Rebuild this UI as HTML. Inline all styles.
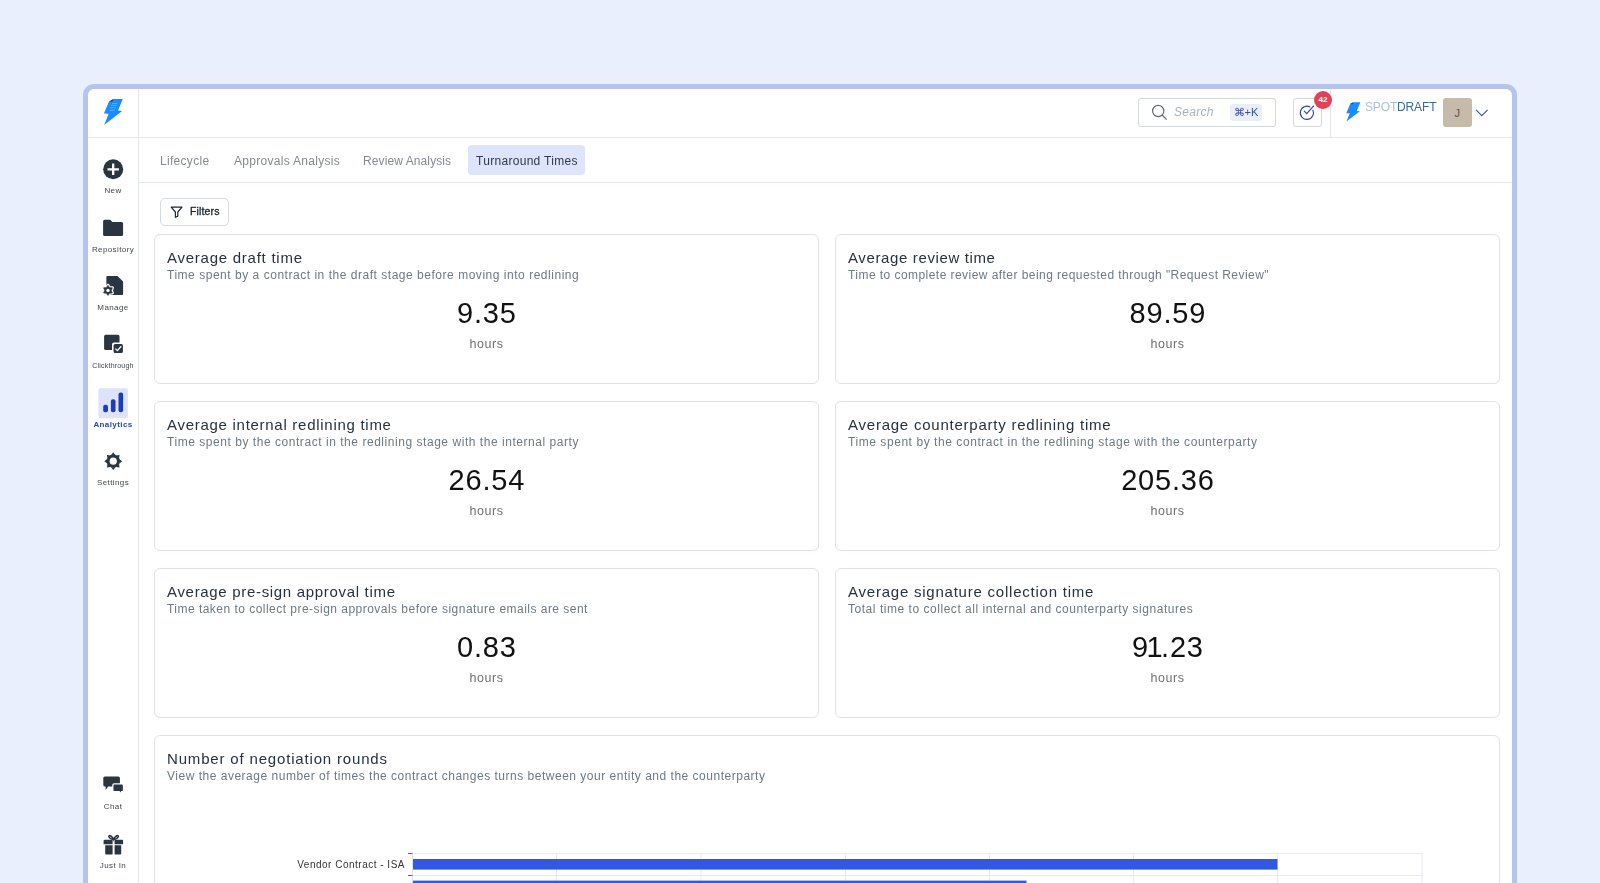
<!DOCTYPE html>
<html><head><meta charset="utf-8">
<style>
*{box-sizing:border-box;margin:0;padding:0}
html,body{width:1600px;height:883px;overflow:hidden;background:#e9effc;font-family:"Liberation Sans",sans-serif}
#frame{position:absolute;left:83px;top:84px;width:1434px;height:900px;border:5px solid #b5c3ef;border-radius:11px;background:#fff}
.vline{position:absolute;background:#e3e6ea;width:1px}
.hline{position:absolute;background:#e3e6ea;height:1px}
.lbl{position:absolute;left:88px;width:50px;text-align:center;font-size:8px;line-height:10px;color:#40464e;white-space:nowrap;letter-spacing:0.4px}
.tab{position:absolute;top:145.5px;height:30px;line-height:30px;font-size:12px;color:#848a92;white-space:nowrap;letter-spacing:0.3px}
.card{position:absolute;border:1.5px solid #dfe2e6;border-radius:6px;background:#fff}
.ttl{position:absolute;font-size:15px;line-height:18px;color:#27323e;white-space:nowrap}
.sub{position:absolute;font-size:12px;line-height:14px;color:#6d7986;white-space:nowrap}
.num{position:absolute;font-size:29px;line-height:32px;color:#111;text-align:center;white-space:nowrap}
.unit{position:absolute;font-size:12.5px;line-height:14px;color:#707070;text-align:center;white-space:nowrap;letter-spacing:0.5px}
.t{position:absolute;white-space:nowrap}
svg{position:absolute;left:0;top:0}
.tx,.ttl,.sub,.num,.unit,.lbl,.tab{will-change:transform}

</style></head><body>
<div id="frame"></div>
<div class="vline" style="left:138px;top:89px;height:800px"></div>
<div class="hline" style="left:88px;top:137px;width:1424px"></div>
<div class="hline" style="left:139px;top:182px;width:1373px"></div>
<div class="vline" style="left:1330px;top:89px;height:48px"></div>

<div class="lbl" style="top:186px">New</div>
<div class="lbl" style="top:245px">Repository</div>
<div class="lbl" style="top:303px">Manage</div>
<div class="lbl" style="top:361px;font-size:7px;letter-spacing:0.2px">Clickthrough</div>
<div class="lbl" style="top:420px;color:#2744bd;font-weight:bold">Analytics</div>
<div class="lbl" style="top:478px">Settings</div>
<div class="lbl" style="top:802px">Chat</div>
<div class="lbl" style="top:861px">Just In</div>

<div class="t" style="left:1138px;top:98px;width:138px;height:29px;border:1px solid #d3d8dc;border-radius:3px"></div>
<div class="t tx" style="left:1174px;top:105px;font-size:12px;line-height:14px;font-style:italic;color:#aab1b8;letter-spacing:0.3px">Search</div>
<div class="t" style="left:1229.5px;top:103.5px;width:32px;height:17.5px;background:#e8eefc;border-radius:3px"></div>
<div class="t tx" style="left:1229.5px;top:105px;width:32px;text-align:center;font-size:11px;line-height:14px;color:#3a4d9e">&#8984;+K</div>
<div class="t" style="left:1293px;top:98px;width:29px;height:29px;border:1px solid #d3d8dc;border-radius:3px"></div>
<div class="t" style="left:1313.5px;top:90.5px;width:18.8px;height:18.8px;border-radius:50%;background:#e4405a;color:#fff;font-size:8px;line-height:18.8px;text-align:center;font-weight:bold">42</div>
<div class="t tx" style="left:1364.5px;top:99.5px;font-size:12px;line-height:14px;letter-spacing:-0.15px"><span style="color:#a9c0de">SPOT</span><span style="color:#3a68a2">DRAFT</span></div>
<div class="t" style="left:1442.5px;top:97.5px;width:29.5px;height:29.5px;border-radius:3px;background:#c6baa9;color:#5d564e;font-size:11px;line-height:30.5px;text-align:center">J</div>

<div class="tab" style="left:160px">Lifecycle</div>
<div class="tab" style="left:233.5px">Approvals Analysis</div>
<div class="tab" style="left:363px;letter-spacing:0.1px">Review Analysis</div>
<div class="t" style="left:468px;top:145px;width:117px;height:30px;background:#dde4fb;border-radius:4px"></div>
<div class="tab" style="left:475.5px;color:#2e3a48">Turnaround Times</div>

<div class="t" style="left:160px;top:198px;width:69px;height:28px;border:1px solid #d7dbe0;border-radius:5px"></div>
<div class="t tx" style="left:190px;top:205px;font-size:10.5px;line-height:13px;color:#1f2937;-webkit-text-stroke:0.35px #1f2937;letter-spacing:0.15px">Filters</div>

<div class="card" style="left:154px;top:735px;width:1346px;height:300px"></div>
<div class="ttl" style="left:166.5px;top:750px;letter-spacing:0.83px">Number of negotiation rounds</div>
<div class="sub" style="left:166.5px;top:769px;letter-spacing:0.51px">View the average number of times the contract changes turns between your entity and the counterparty</div>
<div class="t tx" style="left:200px;top:859px;width:205px;text-align:right;font-size:10px;line-height:12px;color:#333;letter-spacing:0.5px">Vendor Contract - ISA</div>
<div class="t tx" style="left:200px;top:882.5px;width:205px;text-align:right;font-size:10px;line-height:12px;color:#333;letter-spacing:0.5px">Master Service Agreement</div>

<div class="card" style="left:154px;top:234px;width:665px;height:150px"></div>
<div class="ttl" style="left:167px;top:249px;letter-spacing:0.75px">Average draft time</div>
<div class="sub" style="left:167px;top:268px;letter-spacing:0.525px">Time spent by a contract in the draft stage before moving into redlining</div>
<div class="num" style="left:154px;width:665px;top:297px;letter-spacing:0.8px;padding-left:0.8px">9.35</div>
<div class="unit" style="left:154px;width:665px;top:337px">hours</div>
<div class="card" style="left:835px;top:234px;width:665px;height:150px"></div>
<div class="ttl" style="left:848px;top:249px;letter-spacing:0.628px">Average review time</div>
<div class="sub" style="left:848px;top:268px;letter-spacing:0.448px">Time to complete review after being requested through &quot;Request Review&quot;</div>
<div class="num" style="left:835px;width:665px;top:297px;letter-spacing:0.8px;padding-left:0.8px">89.59</div>
<div class="unit" style="left:835px;width:665px;top:337px">hours</div>
<div class="card" style="left:154px;top:401px;width:665px;height:150px"></div>
<div class="ttl" style="left:167px;top:416px;letter-spacing:0.72px">Average internal redlining time</div>
<div class="sub" style="left:167px;top:435px;letter-spacing:0.542px">Time spent by the contract in the redlining stage with the internal party</div>
<div class="num" style="left:154px;width:665px;top:464px;letter-spacing:0.8px;padding-left:0.8px">26.54</div>
<div class="unit" style="left:154px;width:665px;top:504px">hours</div>
<div class="card" style="left:835px;top:401px;width:665px;height:150px"></div>
<div class="ttl" style="left:848px;top:416px;letter-spacing:0.768px">Average counterparty redlining time</div>
<div class="sub" style="left:848px;top:435px;letter-spacing:0.56px">Time spent by the contract in the redlining stage with the counterparty</div>
<div class="num" style="left:835px;width:665px;top:464px;letter-spacing:0.8px;padding-left:0.8px">205.36</div>
<div class="unit" style="left:835px;width:665px;top:504px">hours</div>
<div class="card" style="left:154px;top:568px;width:665px;height:150px"></div>
<div class="ttl" style="left:167px;top:583px;letter-spacing:0.683px">Average pre-sign approval time</div>
<div class="sub" style="left:167px;top:602px;letter-spacing:0.472px">Time taken to collect pre-sign approvals before signature emails are sent</div>
<div class="num" style="left:154px;width:665px;top:631px;letter-spacing:0.8px;padding-left:0.8px">0.83</div>
<div class="unit" style="left:154px;width:665px;top:671px">hours</div>
<div class="card" style="left:835px;top:568px;width:665px;height:150px"></div>
<div class="ttl" style="left:848px;top:583px;letter-spacing:0.772px">Average signature collection time</div>
<div class="sub" style="left:848px;top:602px;letter-spacing:0.534px">Total time to collect all internal and counterparty signatures</div>
<div class="num" style="left:835px;width:665px;top:631px;letter-spacing:0.8px;padding-left:0.8px"><span style="letter-spacing:-1.6px">9</span><span style="letter-spacing:-1.6px">1</span>.23</div>
<div class="unit" style="left:835px;width:665px;top:671px">hours</div>
<svg width="1600" height="883" viewBox="0 0 1600 883">
<!-- sidebar logo -->
<path d="M109.1,101.5 L113.5,99 L122.8,99 L118,110.6 L122.2,111 L104.1,124.9 L108.7,113.8 L103.9,113.6 Z" fill="#1a8cff"/>
<path d="M109.1,101.5 L113.5,99 L112.3,101.6 Z" fill="#0d3a7a"/>
<g stroke="#fff" stroke-width="0.5" opacity="0.6"><path d="M112,103.5h5.3M111.3,105.4h5.3M110.5,107.8h5.3M109.7,110.3h5.3"/></g>
<!-- New -->
<circle cx="113.2" cy="169.3" r="10" fill="#2b3540"/>
<path d="M113.2,163.6v11.4M107.5,169.3h11.4" stroke="#fff" stroke-width="2.3"/>
<!-- Repository folder -->
<path d="M104.7,219.7h5.5l2.2,2.3h9.2a1.5,1.5 0 0 1 1.5,1.5v11a1.5,1.5 0 0 1 -1.5,1.5h-17a1.5,1.5 0 0 1 -1.5,-1.5v-13.3a1.5,1.5 0 0 1 1.5,-1.5z" fill="#2b3540"/>
<!-- Manage -->
<path d="M106.4,277a1,1 0 0 1 1,-1h10.1l5.6,5.6v12.4a1,1 0 0 1 -1,1h-15.7z" fill="#2b3540"/>
<path d="M108.00,285.30 L109.65,287.54 L112.42,287.85 L111.30,290.40 L112.42,292.95 L109.65,293.26 L108.00,295.50 L106.35,293.26 L103.58,292.95 L104.70,290.40 L103.58,287.85 L106.35,287.54Z" fill="#fff" stroke="#fff" stroke-width="3" stroke-linejoin="round"/>
<path d="M108.00,285.30 L109.65,287.54 L112.42,287.85 L111.30,290.40 L112.42,292.95 L109.65,293.26 L108.00,295.50 L106.35,293.26 L103.58,292.95 L104.70,290.40 L103.58,287.85 L106.35,287.54Z" fill="#2b3540" stroke="#2b3540" stroke-width="0.6" stroke-linejoin="round"/>
<circle cx="108" cy="290.4" r="1.7" fill="#fff"/>
<!-- Clickthrough -->
<rect x="104.1" y="334.8" width="15.4" height="15.2" rx="1.6" fill="#2b3540"/>
<rect x="112" y="342.5" width="12.5" height="12" rx="2" fill="#fff"/>
<rect x="113.6" y="344.1" width="9.3" height="8.8" rx="1.5" fill="#2b3540"/>
<path d="M115.4,348.6l2,2l3.8,-4.3" stroke="#fff" stroke-width="1.3" fill="none"/>
<!-- Analytics -->
<rect x="98.4" y="388.2" width="29.5" height="30" rx="2" fill="#dce3fb"/>
<rect x="103.2" y="404.7" width="4.8" height="7.6" rx="2" fill="#1c3bbd"/>
<rect x="110.9" y="399.3" width="4.6" height="13" rx="2" fill="#1c3bbd"/>
<rect x="118.5" y="392.6" width="4.6" height="19.7" rx="2" fill="#1c3bbd"/>
<!-- Settings -->
<g transform="translate(113.25 461.2)" fill="#2b3540">
<circle r="6.6"/>
<g id="tooth"><path d="M-2.2,-6 L0,-8.9 L2.2,-6Z"/></g>
<path d="M-2.2,-6 L0,-8.9 L2.2,-6Z" transform="rotate(45)"/><path d="M-2.2,-6 L0,-8.9 L2.2,-6Z" transform="rotate(90)"/><path d="M-2.2,-6 L0,-8.9 L2.2,-6Z" transform="rotate(135)"/><path d="M-2.2,-6 L0,-8.9 L2.2,-6Z" transform="rotate(180)"/><path d="M-2.2,-6 L0,-8.9 L2.2,-6Z" transform="rotate(225)"/><path d="M-2.2,-6 L0,-8.9 L2.2,-6Z" transform="rotate(270)"/><path d="M-2.2,-6 L0,-8.9 L2.2,-6Z" transform="rotate(315)"/>
<circle r="3.6" fill="#fff"/>
</g>
<!-- Chat -->
<path d="M104.8,776.4h13.6a1.5,1.5 0 0 1 1.5,1.5v7.2a1.5,1.5 0 0 1 -1.5,1.5h-10.2l-2.6,3.4v-3.4h-0.8a1.5,1.5 0 0 1 -1.5,-1.5v-7.2a1.5,1.5 0 0 1 1.5,-1.5z" fill="#2b3540"/>
<path d="M114.3,783.9h7.7a1.5,1.5 0 0 1 1.5,1.5v4.8a1.5,1.5 0 0 1 -1.5,1.5h-0.4v2.6l-2.4,-2.6h-4.9a1.5,1.5 0 0 1 -1.5,-1.5v-4.8a1.5,1.5 0 0 1 1.5,-1.5z" fill="#2b3540" stroke="#fff" stroke-width="1.3"/>
<!-- Just in gift -->
<path d="M113.6,839.6c-1,-2.6 -3.5,-4.8 -4.6,-3.6c-1,1.2 2.2,3.2 4.6,3.6c2.4,-0.4 5.6,-2.4 4.6,-3.6c-1.1,-1.2 -3.6,1 -4.6,3.6z" stroke="#2b3540" stroke-width="1.5" fill="none"/>
<path d="M104.6,839.8h8v4.4h-9v-3.4a1,1 0 0 1 1,-1z M114.6,839.8h7.5a1,1 0 0 1 1,1v3.4h-8.5z" fill="#2b3540"/>
<path d="M105.2,845.3h7.4v9.1h-6.4a1,1 0 0 1 -1,-1z M114.6,845.3h6.6v8.1a1,1 0 0 1 -1,1h-5.6z" fill="#2b3540"/>
<!-- header search icon -->
<circle cx="1158.2" cy="111" r="5.6" stroke="#5e6a75" stroke-width="1.2" fill="none"/>
<path d="M1162.2,115l4.4,4.6" stroke="#5e6a75" stroke-width="1.2"/>
<!-- check icon -->
<path d="M1312.73,109.70 A6.6,6.6 0 1 1 1310.40,107.20" stroke="#2d4aa8" stroke-width="1.15" fill="none"/>
<path d="M1304,110.9l2.7,2.8l7.3,-8.1" stroke="#2d4aa8" stroke-width="1.15" fill="none"/>
<!-- spotdraft bolt -->
<path d="M1350.12,104.11 L1353.40,102.25 L1360.33,102.25 L1356.75,110.89 L1359.88,111.19 L1346.40,121.55 L1349.83,113.28 L1346.25,113.13Z" fill="#1a8cff"/><path d="M1350.12,104.11 L1353.40,102.25 L1352.51,104.19Z" fill="#0d3a7a"/>
<!-- chevron -->
<path d="M1476,109.8l5.8,5.8l5.8,-5.8" stroke="#4454a6" stroke-width="1.15" fill="none"/>
<!-- filter funnel -->
<path d="M171.2,207.2h10.8l-4.2,4.8v4.1l-2.4,1.2v-5.3z" stroke="#1f2937" stroke-width="1.2" fill="none" stroke-linejoin="round"/>
<!-- chart -->
<g stroke="#e6e9f2" stroke-width="1" fill="none">
<path d="M412.5,853.5h1010M412.5,875.5h1010"/>
<path d="M556.5,853.5v40M701,853.5v40M845.5,853.5v40M989.5,853.5v40M1133.5,853.5v40M1277.5,853.5v40M1422,853.5v40"/>
</g>
<path d="M412.5,853v40" stroke="#dde2ec" stroke-width="1"/>
<path d="M408,853.5h4.5M408,875.5h4.5" stroke="#666" stroke-width="1"/>
<rect x="413" y="859" width="864.5" height="10.6" fill="#3358e0"/>
<rect x="413" y="880.6" width="613.5" height="10.6" fill="#3358e0"/>
</svg>

</body></html>
